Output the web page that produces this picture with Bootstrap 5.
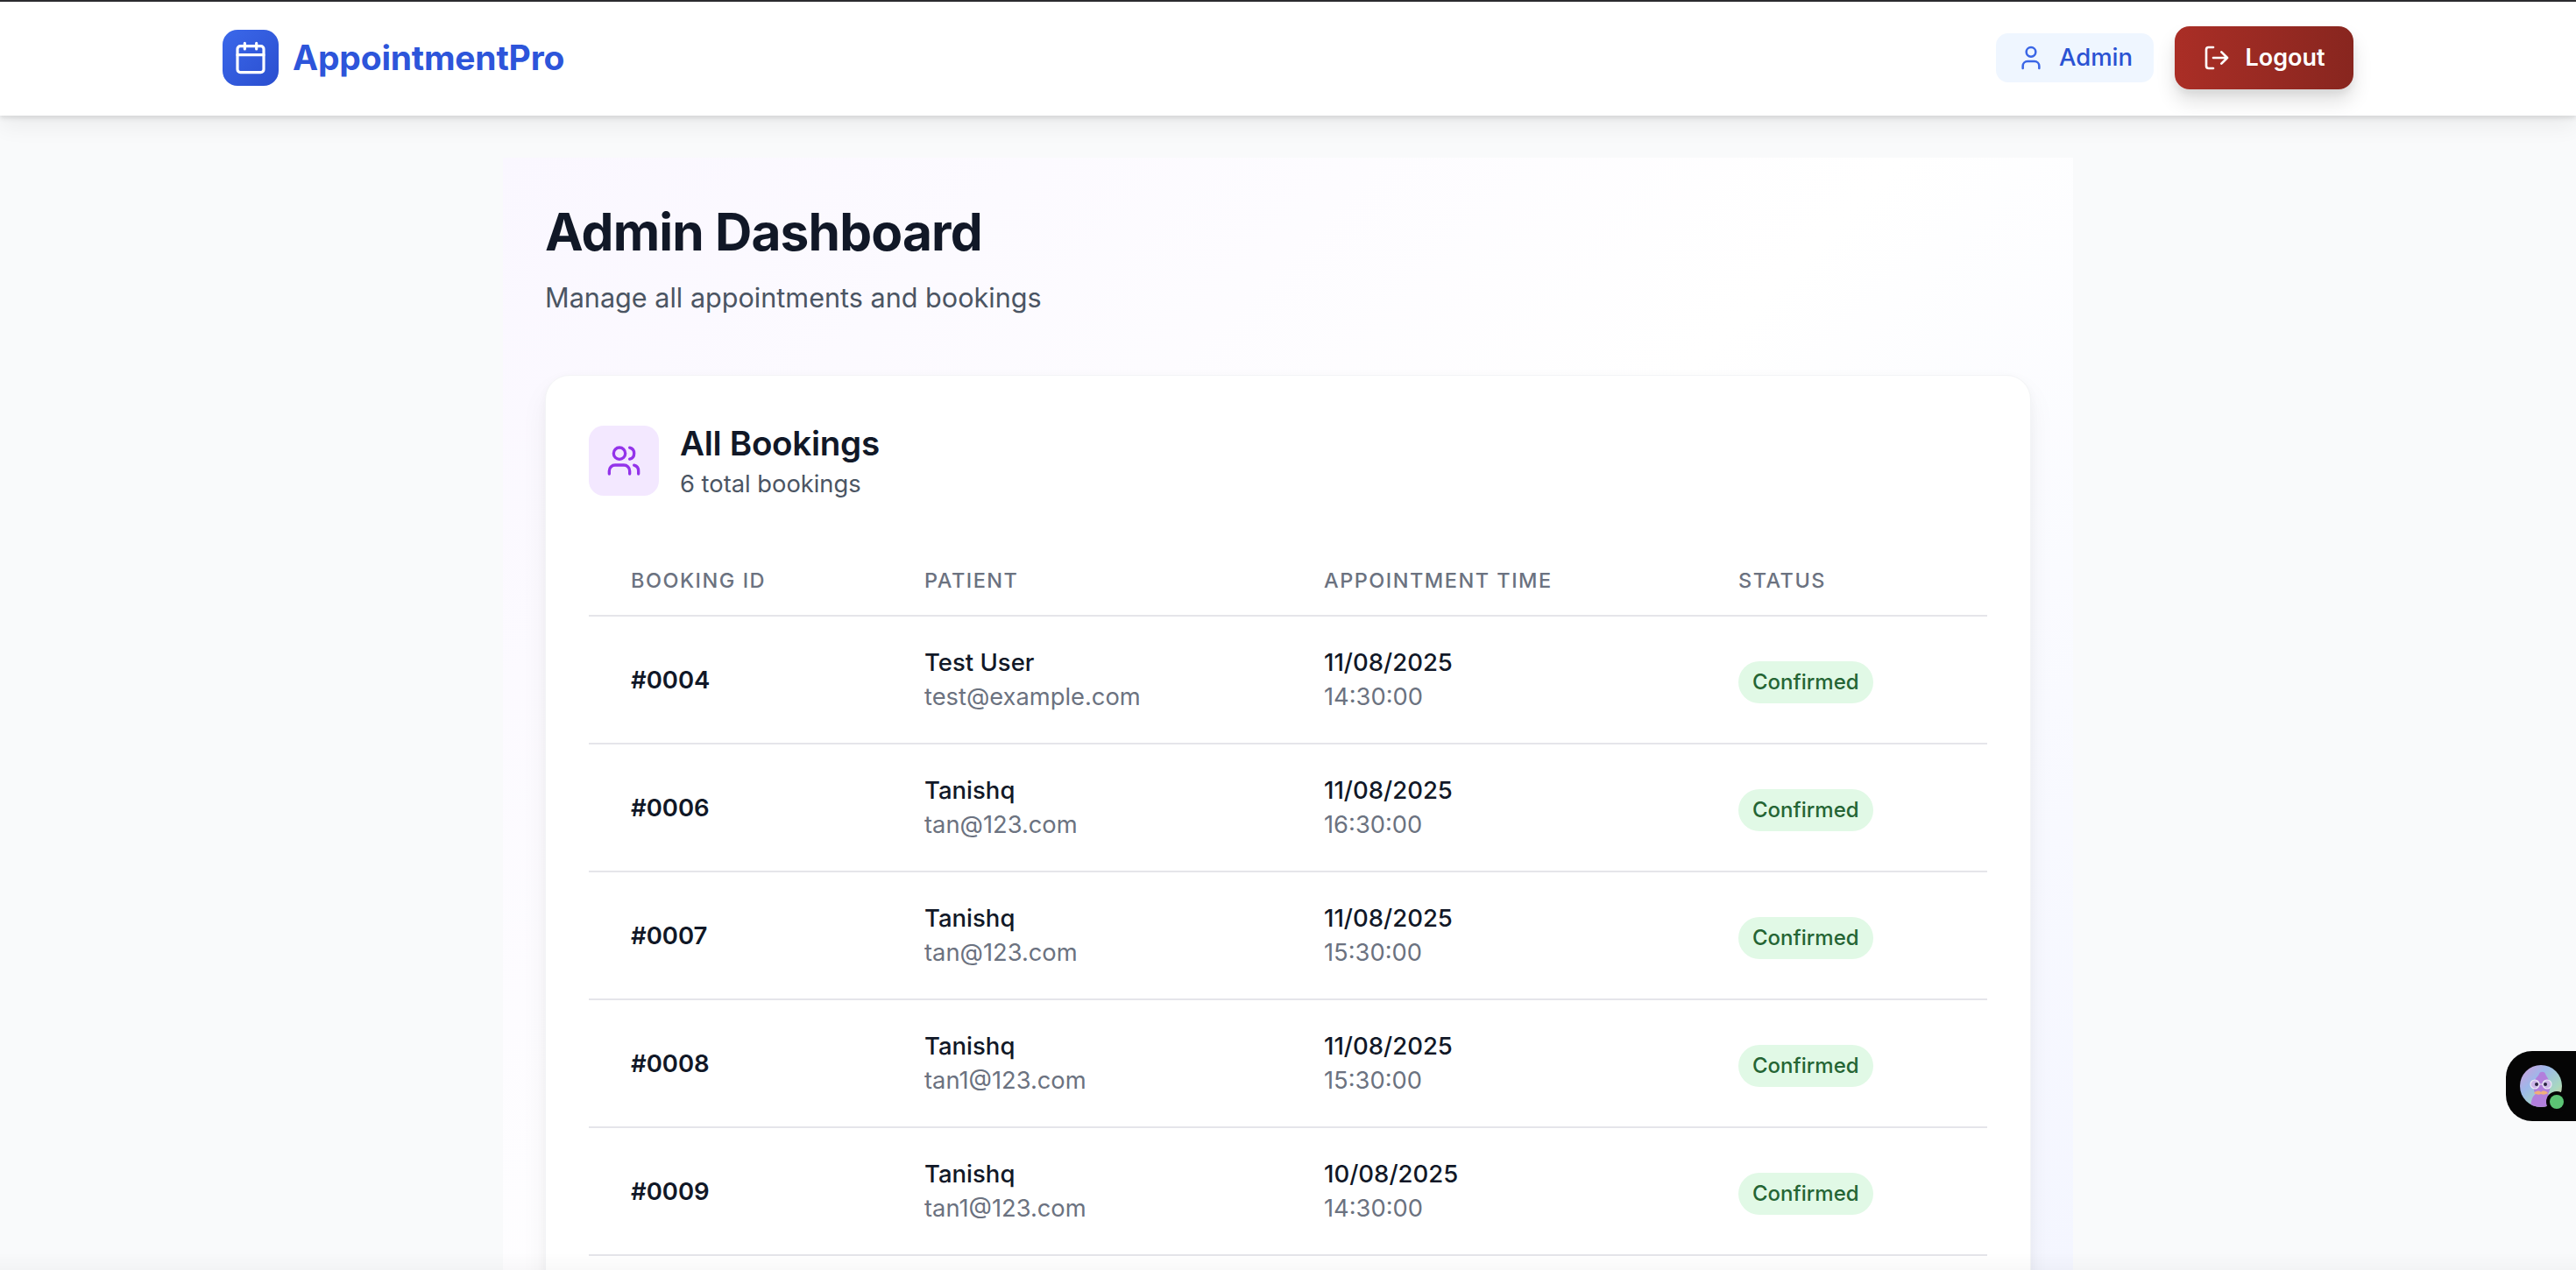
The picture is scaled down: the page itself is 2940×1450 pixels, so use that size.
<!DOCTYPE html>
<html lang="en">

<head>
  <meta charset="UTF-8" />
  <meta name="viewport" content="width=device-width, initial-scale=1" />
  <title>AppointmentPro - Admin</title>
  <link href="https://cdn.jsdelivr.net/npm/bootstrap@5.3.3/dist/css/bootstrap.min.css" rel="stylesheet">
  <style>
    html, body { height: 1450px; overflow: hidden; }
    body { font-family: Inter, "Liberation Sans", sans-serif; background: #f9fafb; color: #111827; }

    .top-bar { height: 132px; padding: 0 254px; background: #fff; border-top: 2px solid #2b2b2f;
      box-shadow: 0 3px 5px rgba(0,0,0,.1), 0 12px 24px rgba(0,0,0,.06); position: relative; z-index: 2; }
    .logo-box { width: 64px; height: 64px; border-radius: 17px; background: linear-gradient(135deg, #3b68ea, #2a4ecf); margin-top: -2px; }
    .logo-text { font-size: 39px; font-weight: 700; color: #2d55da; letter-spacing: -.2px; margin-top: -2px; }
    .admin-pill { height: 56px; width: 180px; border-radius: 14px; background: #eff6ff; color: #2a52d3;
      font-size: 27.5px; font-weight: 500; margin-top: -2px; }
    .logout-btn { height: 72px; width: 204px; border: 0; border-radius: 17px; color: #fff; font-size: 27px; font-weight: 600;
      background: linear-gradient(90deg, #aa2e26, #88261f); box-shadow: 0 14px 22px rgba(0,0,0,.12), 0 5px 9px rgba(0,0,0,.06); margin-top: -2px; }

    .page-panel { width: 1792px; margin: 48px auto 0; padding: 50px 48px 0;
      background: linear-gradient(135deg, #faf7ff 0%, #fff 50%, #f3f5ff 100%); height: 1400px; }
    .page-title { font-size: 58.6px; font-weight: 700; line-height: 1.2; color: #111827; letter-spacing: -.85px; margin: 0; }
    .page-sub { font-size: 30.6px; color: #4b5563; margin: 20px 0 0; line-height: 1.3; }

    .bookings-card { margin-top: 68px; padding: 52px 49px 48px; background: #fff; border: 1px solid #f3f4f6; border-radius: 28px;
      box-shadow: 0 16px 32px rgba(0,0,0,.05), 0 4px 12px rgba(0,0,0,.03); }
    .users-box { width: 80px; height: 80px; border-radius: 17px; background: #f3e8ff; }
    .card-heading { font-size: 38.6px; font-weight: 600; line-height: 1.2; color: #111827; letter-spacing: -.3px; margin: 2px 0 0; }
    .card-sub { font-size: 27.3px; color: #4b5563; margin: 6px 0 0; line-height: 1.3; }

    .bookings-table { margin: 56px 0 0; table-layout: fixed; width: 100%; }
    .bookings-table th { font-size: 23.5px; font-weight: 500; color: #6b7280; letter-spacing: 1.5px; text-transform: uppercase;
      padding: 0 48px 4px; height: 76px; vertical-align: middle; border-bottom: 2px solid #e5e5ea; }
    .bookings-table td { padding: 1px 48px 0; height: 146px; vertical-align: middle; border-bottom: 2px solid #e5e5ea; }
    .booking-id { font-size: 27.5px; font-weight: 600; color: #111827; }
    .cell-main { font-size: 27.5px; font-weight: 500; color: #111827; line-height: 39px; }
    .cell-sub { font-size: 27.3px; color: #6b7280; line-height: 39px; }
    .status-pill { display: inline-block; height: 48px; line-height: 48px; padding: 0 16px; border-radius: 24px;
      background: #e1f9e6; color: #256534; font-size: 24px; font-weight: 500; margin-top: 5px; }

    .assistant-tab { position: fixed; right: 0; top: 1200px; width: 80px; height: 80px; background: #050505;
      border-radius: 30px 0 0 30px; }
    .assistant-face { position: absolute; left: 16px; top: 16px; width: 48px; height: 48px; border-radius: 50%; overflow: hidden; }
    .assistant-dot { position: absolute; left: 50px; top: 50px; width: 16px; height: 16px; border-radius: 50%;
      background: #5cc474; box-shadow: 0 0 0 4px #050505; }
    .bottom-fade { position: fixed; left: 0; right: 0; bottom: 0; height: 20px;
      background: linear-gradient(180deg, rgba(0,0,0,0), rgba(0,0,0,.025)); }
  </style>
</head>

<body>
  <nav class="top-bar d-flex align-items-center justify-content-between">
    <div class="d-flex align-items-center gap-3">
      <div class="logo-box d-flex align-items-center justify-content-center">
        <svg width="40" height="40" viewBox="0 0 24 24" fill="none" stroke="#fff" stroke-width="1.9" stroke-linecap="round" stroke-linejoin="round">
          <path d="M8 2v4M16 2v4" /><rect x="3" y="4" width="18" height="18" rx="2" /><path d="M3 10h18" />
        </svg>
      </div>
      <span class="logo-text">AppointmentPro</span>
    </div>
    <div class="d-flex align-items-center gap-4">
      <div class="admin-pill d-flex align-items-center justify-content-center gap-3">
        <svg width="32" height="32" viewBox="0 0 24 24" fill="none" stroke="#3a66e6" stroke-width="1.9" stroke-linecap="round" stroke-linejoin="round">
          <path d="M19 21v-2a4 4 0 0 0-4-4H9a4 4 0 0 0-4 4v2" /><circle cx="12" cy="7" r="4" />
        </svg>
        <span>Admin</span>
      </div>
      <button class="logout-btn d-flex align-items-center justify-content-center gap-3">
        <svg width="32" height="32" viewBox="0 0 24 24" fill="none" stroke="#fff" stroke-width="2" stroke-linecap="round" stroke-linejoin="round">
          <path d="M9 21H5a2 2 0 0 1-2-2V5a2 2 0 0 1 2-2h4" /><path d="M16 17l5-5-5-5M21 12H9" />
        </svg>
        <span>Logout</span>
      </button>
    </div>
  </nav>

  <main class="page-panel">
    <h1 class="page-title">Admin Dashboard</h1>
    <p class="page-sub">Manage all appointments and bookings</p>

    <section class="bookings-card">
      <div class="d-flex align-items-center gap-4">
        <div class="users-box d-flex align-items-center justify-content-center">
          <svg width="40" height="40" viewBox="0 0 24 24" fill="none" stroke="#9333ea" stroke-width="2" stroke-linecap="round" stroke-linejoin="round">
            <path d="M16 21v-2a4 4 0 0 0-4-4H6a4 4 0 0 0-4 4v2" /><circle cx="9" cy="7" r="4" />
            <path d="M22 21v-2a4 4 0 0 0-3-3.87" /><path d="M16 3.13a4 4 0 0 1 0 7.75" />
          </svg>
        </div>
        <div>
          <h2 class="card-heading">All Bookings</h2>
          <p class="card-sub">6 total bookings</p>
        </div>
      </div>

      <table class="bookings-table">
        <colgroup><col style="width:335px"><col style="width:456px"><col style="width:473px"><col></colgroup>
        <thead>
          <tr><th>Booking ID</th><th>Patient</th><th>Appointment Time</th><th>Status</th></tr>
        </thead>
        <tbody id="filasReservas"></tbody>
      </table>
    </section>
  </main>

  <div class="assistant-tab">
    <div class="assistant-face">
      <svg width="48" height="48" viewBox="0 0 48 48">
        <defs>
          <linearGradient id="faceBg" x1="0" y1="0" x2="1" y2="1">
            <stop offset="0" stop-color="#d59ad8" /><stop offset=".35" stop-color="#9db8ea" /><stop offset=".7" stop-color="#a8d8c0" /><stop offset="1" stop-color="#f0c890" />
          </linearGradient>
        </defs>
        <rect width="48" height="48" fill="url(#faceBg)" />
        <path d="M12 48c1-8 2-12 6-15-3-4-3-10-1-15 1-4 4-5 5-8 1-3 6-3 7 0 1 3 3 4 4 8 2 5 2 11-1 15 4 3 5 7 6 15z" fill="#b27fdc" />
        <circle cx="17" cy="22" r="5" fill="#cdb6e8" stroke="#ecebf4" stroke-width="1.2" />
        <circle cx="31" cy="22" r="5" fill="#cdb6e8" stroke="#ecebf4" stroke-width="1.2" />
        <path d="M22 22h4" stroke="#ecebf4" stroke-width="1.2" />
        <circle cx="19" cy="22" r="2" fill="#2a2540" /><circle cx="29" cy="22" r="2" fill="#2a2540" />
        <path d="M16 32c3-3 6-3 8-1 2-2 5-2 8 1-3 2-6 2-8 1-2 1-5 1-8-1z" fill="#f0b07a" />
      </svg>
    </div>
    <div class="assistant-dot"></div>
  </div>
  <div class="bottom-fade"></div>

  <script src="https://cdn.jsdelivr.net/npm/bootstrap@5.3.3/dist/js/bootstrap.bundle.min.js"></script>
  <script>
    const reservas = [
      ['#0004', 'Test User', 'test@example.com', '11/08/2025', '14:30:00'],
      ['#0006', 'Tanishq', 'tan@123.com', '11/08/2025', '16:30:00'],
      ['#0007', 'Tanishq', 'tan@123.com', '11/08/2025', '15:30:00'],
      ['#0008', 'Tanishq', 'tan1@123.com', '11/08/2025', '15:30:00'],
      ['#0009', 'Tanishq', 'tan1@123.com', '10/08/2025', '14:30:00']
    ];

    document.getElementById('filasReservas').innerHTML = reservas.map(r => `
      <tr>
        <td class="booking-id">${r[0]}</td>
        <td><div class="cell-main">${r[1]}</div><div class="cell-sub">${r[2]}</div></td>
        <td><div class="cell-main">${r[3]}</div><div class="cell-sub">${r[4]}</div></td>
        <td><span class="status-pill">Confirmed</span></td>
      </tr>`).join('');
  </script>
</body>

</html>
